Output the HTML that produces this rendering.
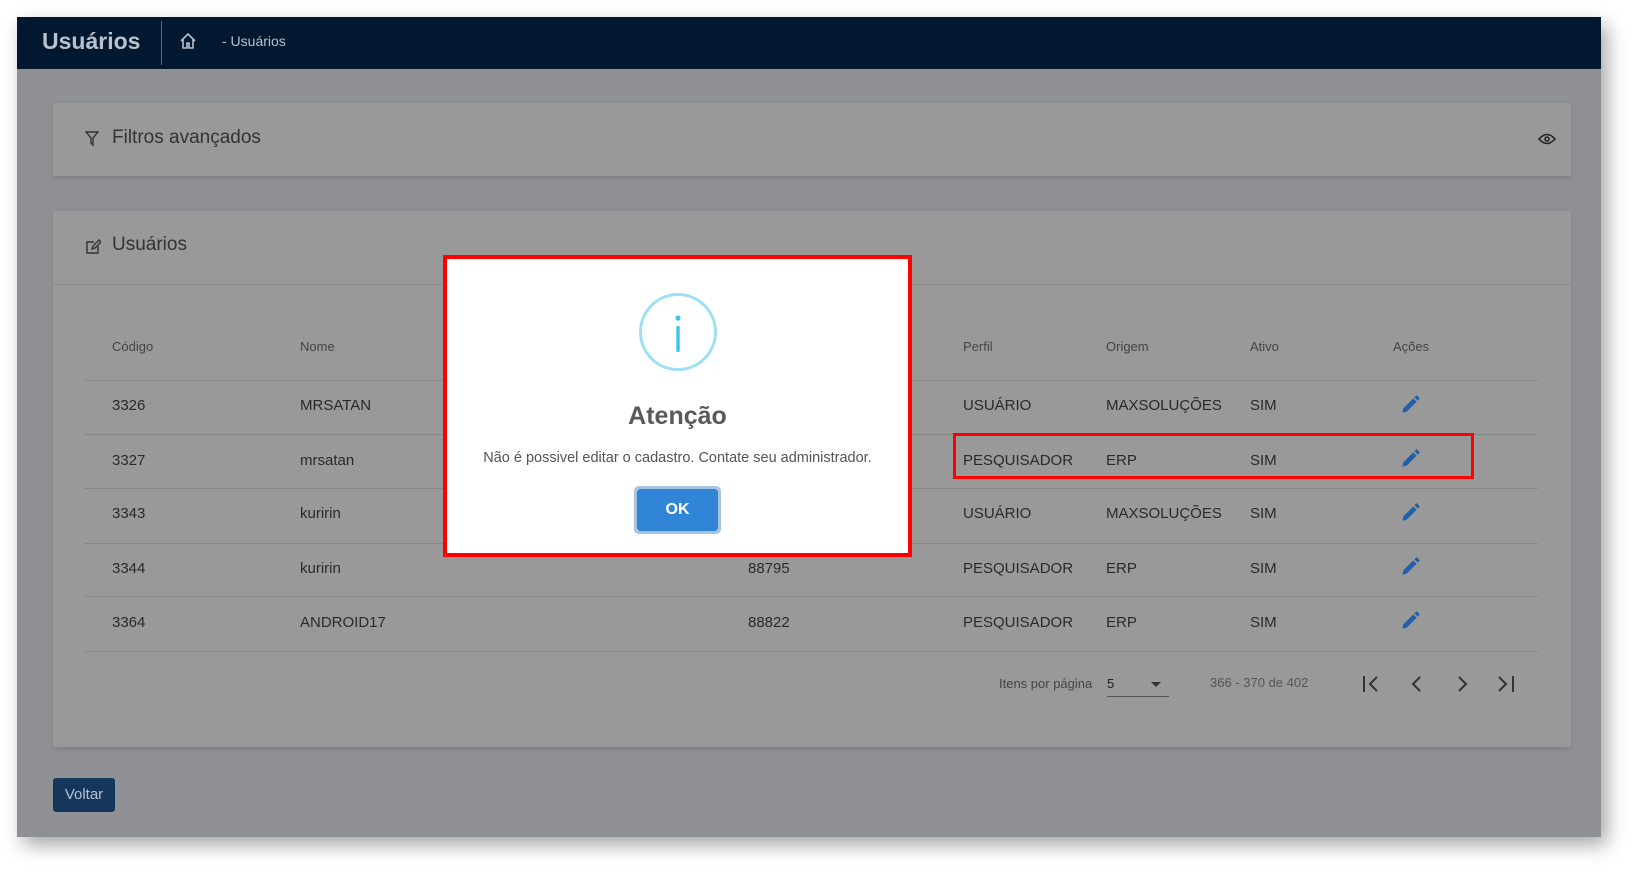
<!DOCTYPE html>
<html><head><meta charset="utf-8"><style>
*{box-sizing:border-box;margin:0;padding:0}
body{width:1649px;height:885px;background:#fff;font-family:"Liberation Sans",sans-serif;position:relative;overflow:hidden}
.frame{position:absolute;left:17px;top:17px;width:1584px;height:820px;background:#8f9094;box-shadow:6px 8px 18px rgba(0,0,0,.35);overflow:hidden}
.nav{position:absolute;left:0;top:0;width:100%;height:52px;background:#011830}
.abs{position:absolute;white-space:nowrap}
.card{position:absolute;background:#999;box-shadow:0 2px 4px rgba(0,0,0,.12)}
.t{color:#2a2a2a;font-size:15px}
.h{color:#444;font-size:13px}
.line{position:absolute;left:67px;width:1454px;height:1px;background:#888}
</style></head><body>
<div class="frame">
 <div class="nav">
  <div class="abs" style="left:25px;top:11px;font-size:23px;color:#b9c1cc;font-weight:bold">Usuários</div>
  <div class="abs" style="left:144px;top:4px;width:1px;height:44px;background:#667"></div>
  <svg class="abs" style="left:162px;top:15px" width="18" height="18" viewBox="0 0 18 18" fill="none" stroke="#b9c1cc" stroke-width="1.6"><path d="M2 9L9 2l7 7M4 7.5V16h4v-5h2v5h4V7.5"/></svg>
  <div class="abs" style="left:205px;top:16px;font-size:14px;color:#b9c1cc">- Usuários</div>
 </div>
 <div class="card" style="left:36px;top:86px;width:1518px;height:73px">
  <svg class="abs" style="left:32px;top:28px" width="14" height="16" viewBox="0 0 14 16" fill="none" stroke="#333" stroke-width="1.4"><path d="M1 1h12L8 7v7l-2-2V7z"/></svg>
  <div class="abs" style="left:59px;top:24px;font-size:19px;color:#333">Filtros avançados</div>
  <svg class="abs" style="left:1485px;top:30px" width="18" height="12" viewBox="0 0 18 12" fill="none" stroke="#222" stroke-width="1.5"><path d="M1 6Q9-3 17 6Q9 15 1 6z"/><circle cx="9" cy="6" r="2"/></svg>
 </div>
 <div class="card" style="left:36px;top:194px;width:1518px;height:536px">
  <div class="abs" style="left:0;top:73px;width:100%;height:1px;background:#8c8c8c"></div>
  <svg class="abs" style="left:32px;top:28px" width="16" height="16" viewBox="0 0 16 16" fill="none" stroke="#333" stroke-width="1.4"><path d="M9 3H2v11h11V7M7 10l1-3 6-6 2 2-6 6z"/></svg>
  <div class="abs" style="left:59px;top:23px;font-size:19px;color:#333">Usuários</div>
 </div>
 <div class="abs h" style="left:95px;top:322px">Código</div>
 <div class="abs h" style="left:283px;top:322px">Nome</div>
 <div class="abs h" style="left:946px;top:322px">Perfil</div>
 <div class="abs h" style="left:1089px;top:322px">Origem</div>
 <div class="abs h" style="left:1233px;top:322px">Ativo</div>
 <div class="abs h" style="left:1376px;top:322px">Ações</div>
 <div class="line" style="top:363px"></div>
 <div class="line" style="top:417px"></div>
 <div class="line" style="top:471px"></div>
 <div class="line" style="top:526px"></div>
 <div class="line" style="top:579px"></div>
 <div class="line" style="top:634px"></div>
 <div class="abs t" style="left:95px;top:380px">3326</div><div class="abs t" style="left:283px;top:380px">MRSATAN</div><div class="abs t" style="left:946px;top:380px">USUÁRIO</div><div class="abs t" style="left:1089px;top:380px">MAXSOLUÇÕES</div><div class="abs t" style="left:1233px;top:380px">SIM</div>
 <div class="abs t" style="left:95px;top:435px">3327</div><div class="abs t" style="left:283px;top:435px">mrsatan</div><div class="abs t" style="left:946px;top:435px">PESQUISADOR</div><div class="abs t" style="left:1089px;top:435px">ERP</div><div class="abs t" style="left:1233px;top:435px">SIM</div>
 <div class="abs t" style="left:95px;top:488px">3343</div><div class="abs t" style="left:283px;top:488px">kuririn</div><div class="abs t" style="left:946px;top:488px">USUÁRIO</div><div class="abs t" style="left:1089px;top:488px">MAXSOLUÇÕES</div><div class="abs t" style="left:1233px;top:488px">SIM</div>
 <div class="abs t" style="left:95px;top:543px">3344</div><div class="abs t" style="left:283px;top:543px">kuririn</div><div class="abs t" style="left:731px;top:543px">88795</div><div class="abs t" style="left:946px;top:543px">PESQUISADOR</div><div class="abs t" style="left:1089px;top:543px">ERP</div><div class="abs t" style="left:1233px;top:543px">SIM</div>
 <div class="abs t" style="left:95px;top:597px">3364</div><div class="abs t" style="left:283px;top:597px">ANDROID17</div><div class="abs t" style="left:731px;top:597px">88822</div><div class="abs t" style="left:946px;top:597px">PESQUISADOR</div><div class="abs t" style="left:1089px;top:597px">ERP</div><div class="abs t" style="left:1233px;top:597px">SIM</div>
 <svg class="abs" style="left:1382px;top:377px" width="22" height="22" viewBox="0 0 20 20"><path d="M3 17l1-4 9-9 3 3-9 9zM14 3l2-2 3 3-2 2z" fill="#1f5fae"/></svg>
 <svg class="abs" style="left:1382px;top:431px" width="22" height="22" viewBox="0 0 20 20"><path d="M3 17l1-4 9-9 3 3-9 9zM14 3l2-2 3 3-2 2z" fill="#1f5fae"/></svg>
 <svg class="abs" style="left:1382px;top:485px" width="22" height="22" viewBox="0 0 20 20"><path d="M3 17l1-4 9-9 3 3-9 9zM14 3l2-2 3 3-2 2z" fill="#1f5fae"/></svg>
 <svg class="abs" style="left:1382px;top:539px" width="22" height="22" viewBox="0 0 20 20"><path d="M3 17l1-4 9-9 3 3-9 9zM14 3l2-2 3 3-2 2z" fill="#1f5fae"/></svg>
 <svg class="abs" style="left:1382px;top:593px" width="22" height="22" viewBox="0 0 20 20"><path d="M3 17l1-4 9-9 3 3-9 9zM14 3l2-2 3 3-2 2z" fill="#1f5fae"/></svg>
 <div class="abs" style="left:982px;top:659px;font-size:13px;color:#444">Itens por página</div>
 <div class="abs" style="left:1090px;top:659px;font-size:13px;color:#222">5</div>
 <div class="abs" style="left:1090px;top:679px;width:62px;height:1px;background:#555"></div>
 <div class="abs" style="left:1134px;top:665px;border:5px solid transparent;border-top:5px solid #333"></div>
 <div class="abs" style="left:1193px;top:658px;font-size:13px;color:#555">366 - 370 de 402</div>
 <svg class="abs" style="left:1344px;top:656px" width="180" height="22" viewBox="0 0 180 22" fill="none" stroke="#333" stroke-width="2"><path d="M3 3v16M16 4l-7 7 7 7M59 4l-7 7 7 7M98 4l7 7-7 7M138 4l7 7-7 7M152 3v16"/></svg>
 <div class="abs" style="left:36px;top:761px;width:62px;height:34px;background:#15375c;border-radius:3px;color:#b9c1cc;font-size:15px;line-height:34px;text-align:center">Voltar</div>
</div>
<div class="abs" style="left:953px;top:433px;width:521px;height:46px;border:3px solid #f00"></div>
<div class="abs" style="left:443px;top:255px;width:469px;height:302px;background:#fff;border:4px solid #f00">
 <div class="abs" style="left:192px;top:34px;width:78px;height:78px;border:3px solid #9de0f6;border-radius:50%"></div>
 <svg class="abs" style="left:225px;top:55px" width="12" height="40" viewBox="0 0 12 40"><circle cx="6" cy="4" r="2.6" fill="#3fc3ee"/><rect x="4.3" y="12" width="3.4" height="26" rx="1" fill="#3fc3ee"/></svg>
 <div class="abs" style="left:0;width:100%;text-align:center;top:143px;font-size:25px;color:#595959;font-weight:bold">Atenção</div>
 <div class="abs" style="left:0;width:100%;text-align:center;top:191px;font-size:14.5px;color:#545454">Não é possivel editar o cadastro. Contate seu administrador.</div>
 <div class="abs" style="left:187px;top:227px;width:87px;height:48px;border:3px solid #a8c3e0;border-radius:5px"><div style="width:100%;height:100%;background:#3085d6;border-radius:3px;color:#fff;font-weight:bold;font-size:16px;line-height:42px;text-align:center">OK</div></div>
</div>
</body></html>
